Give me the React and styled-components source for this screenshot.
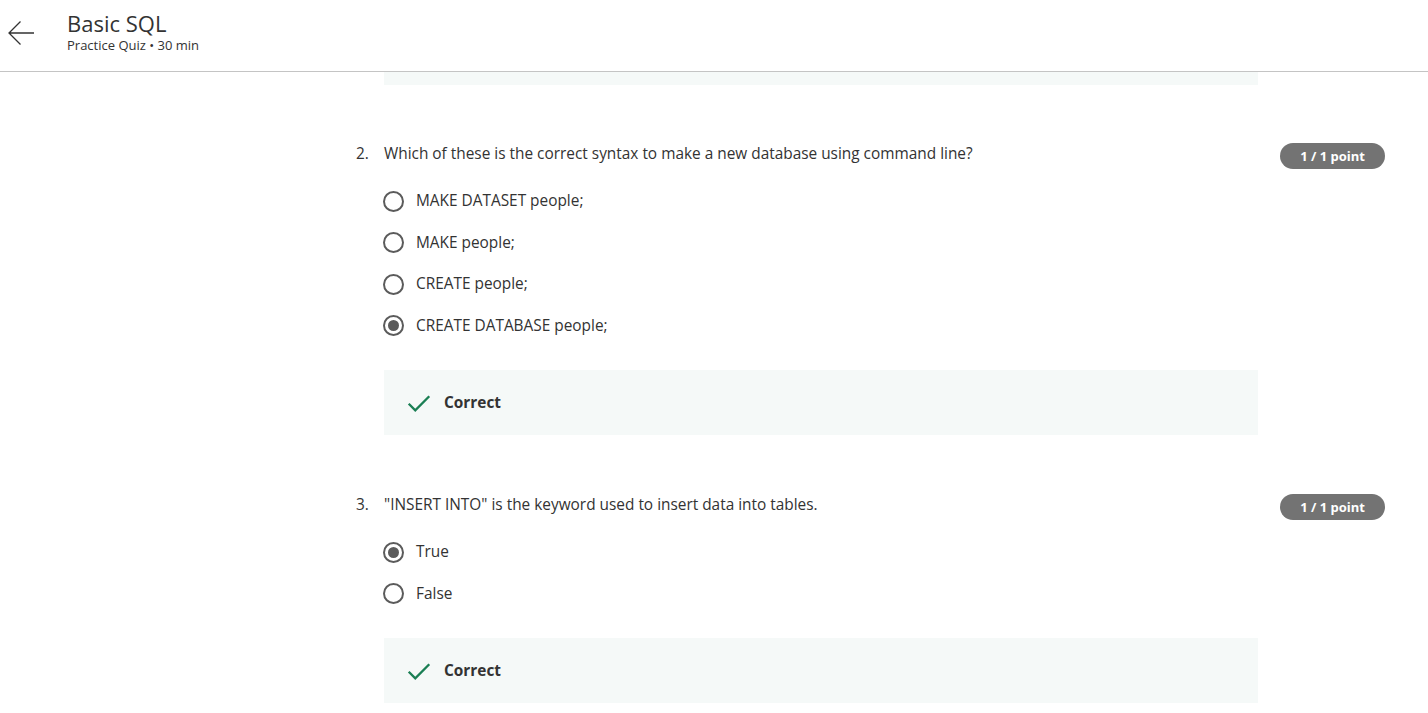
import React from "react";
import styled, { createGlobalStyle } from "styled-components";

const Global = createGlobalStyle`
  html, body { margin: 0; padding: 0; background: #fff; }
  body { font-family: "Open Sans", "Liberation Sans", sans-serif; color: #333; overflow: hidden; }
  * { box-sizing: border-box; }
`;

const Header = styled.header`
  height: 72px;
  border-bottom: 1px solid #c4c4c4;
  display: flex;
  align-items: flex-start;
`;

const BackButton = styled.button`
  border: 0;
  background: none;
  padding: 0;
  margin: 18px 0 0 6px;
  width: 30px;
  height: 30px;
  display: flex;
  align-items: center;
  justify-content: center;
  color: #333;
  cursor: pointer;
`;

const TitleBlock = styled.div`
  margin: 9px 0 0 31px;
  display: flex;
  flex-direction: column;
`;

const Title = styled.h1`
  margin: 0;
  font-size: 22px;
  line-height: 28px;
  font-weight: 400;
  color: #333;
`;

const Subtitle = styled.div`
  font-size: 13px;
  line-height: 17px;
  color: #333;
`;

const Main = styled.main`
  padding-left: 356px;
  width: 1385px;
`;

const TopFeedback = styled.div`
  margin-left: 28px;
  width: 874px;
  height: 13px;
  background: #f5f9f8;
`;

const Question = styled.section`
  display: flex;
  margin-top: 57px;
  & + & {
    margin-top: 58px;
  }
`;

const Number = styled.div`
  width: 28px;
  font-size: 15.4px;
  line-height: 24px;
  flex-shrink: 0;
`;

const Body = styled.div`
  width: 874px;
  flex-shrink: 0;
`;

const Prompt = styled.div`
  font-size: 15.4px;
  line-height: 24px;
`;

const Badge = styled.div`
  margin-left: auto;
  margin-top: 1px;
  height: 26px;
  padding: 0 20px;
  border-radius: 13px;
  background: #737373;
  color: #fff;
  font-size: 13px;
  font-weight: 700;
  display: flex;
  align-items: center;
  white-space: nowrap;
`;

const Options = styled.div`
  display: flex;
  flex-direction: column;
  gap: 17.5px;
  margin-top: 23px;
`;

const Option = styled.label`
  display: flex;
  align-items: center;
  font-size: 15.4px;
  line-height: 24px;
  color: #333;
`;

const Radio = styled.span`
  width: 21px;
  height: 21px;
  border-radius: 50%;
  border: 2px solid #5b5b5b;
  margin-left: -1px;
  margin-right: 12px;
  display: flex;
  align-items: center;
  justify-content: center;
  flex-shrink: 0;
  &::after {
    content: "";
    width: 11px;
    height: 11px;
    border-radius: 50%;
    background: ${(p) => (p.$checked ? "#5b5b5b" : "transparent")};
  }
`;

const Feedback = styled.div`
  margin-top: 32.5px;
  height: 65px;
  background: #f5f9f8;
  display: flex;
  align-items: center;
  padding-left: 21px;
  gap: 11px;
  font-size: 15.4px;
  font-weight: 700;
  color: #333;
`;

const CheckIcon = () => (
  <svg width="28" height="28" viewBox="0 0 24 24" fill="none">
    <path d="M3.2 12.6 L8.8 18.2 L20.8 6.2" stroke="#1a7f54" strokeWidth="2" />
  </svg>
);

const ArrowLeft = () => (
  <svg width="28" height="28" viewBox="0 0 28 28" fill="none">
    <path d="M27 14 H2 M13.5 2.5 L2 14 L13.5 25.5" stroke="#333" strokeWidth="1.3" />
  </svg>
);

const questions = [
  {
    n: "2.",
    prompt: "Which of these is the correct syntax to make a new database using command line?",
    options: ["MAKE DATASET people;", "MAKE people;", "CREATE people;", "CREATE DATABASE people;"],
    checked: 3,
  },
  {
    n: "3.",
    prompt: "\"INSERT INTO\" is the keyword used to insert data into tables.",
    options: ["True", "False"],
    checked: 0,
  },
];

export default function App() {
  return (
    <>
      <Global />
      <Header>
        <BackButton aria-label="Back">
          <ArrowLeft />
        </BackButton>
        <TitleBlock>
          <Title>Basic SQL</Title>
          <Subtitle>Practice Quiz • 30 min</Subtitle>
        </TitleBlock>
      </Header>
      <Main>
        <TopFeedback />
        {questions.map((q) => (
          <Question key={q.n}>
            <Number>{q.n}</Number>
            <Body>
              <Prompt>{q.prompt}</Prompt>
              <Options>
                {q.options.map((o, i) => (
                  <Option key={o}>
                    <Radio $checked={i === q.checked} />
                    {o}
                  </Option>
                ))}
              </Options>
              <Feedback>
                <CheckIcon />
                Correct
              </Feedback>
            </Body>
            <Badge>1 / 1 point</Badge>
          </Question>
        ))}
      </Main>
    </>
  );
}
